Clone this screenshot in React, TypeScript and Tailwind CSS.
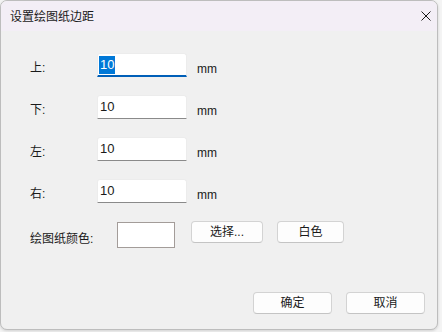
import React from "react";

const font = { fontFamily: '"Liberation Sans", "Noto Sans CJK SC", sans-serif' };

function Field({ label, focused }: { label: string; focused?: boolean }) {
  return (
    <div className="flex items-center h-[24px]">
      <div className="w-[67px] pt-[6px] text-[12px] text-[#1a1a1a]">{label}</div>
      <div
        className={
          "w-[90px] h-[24px] bg-white flex items-center pl-[1px] rounded-t-[3px] border-x border-t border-[#ececec] " +
          (focused ? "border-b-2 border-b-[#005fb8]" : "border-b border-b-[#8a8a8a]")
        }
      >
        {focused ? (
          <span className="bg-[#0078d7] text-white text-[13px] leading-[18px] px-[1px]">10</span>
        ) : (
          <span className="text-[#1a1a1a] text-[13px] leading-[18px] px-[1px]">10</span>
        )}
      </div>
      <div className="ml-[10px] pt-[8px] text-[12px] text-[#1a1a1a]">mm</div>
    </div>
  );
}

function Btn({ children, w }: { children: React.ReactNode; w: string }) {
  return (
    <div
      className={
        w +
        " h-[22px] bg-[#fdfdfd] border border-[#d3d3d3] border-b-[#c4c4c4] rounded-[4px] flex items-center justify-center text-[12px] text-[#1a1a1a]"
      }
    >
      {children}
    </div>
  );
}

export default function App() {
  return (
    <div className="w-[442px] h-[332px] bg-[#f4f4f4] overflow-hidden" style={font}>
      <div className="w-[438px] h-[330px] bg-[#f0f0f0] border border-[#bdbdbd] rounded-[7px] overflow-hidden flex flex-col shadow-[0_1px_3px_rgba(0,0,0,0.15)]">
        <div className="h-[30px] bg-[#f3eef6] flex items-center justify-between pl-[9px] pr-[6px] shrink-0">
          <span className="text-[12px] text-[#1a1a1a] pt-[1px]">设置绘图纸边距</span>
          <svg width="10" height="10" viewBox="0 0 10 10">
            <path d="M0.5 0.5 L9.5 9.5 M9.5 0.5 L0.5 9.5" stroke="#1a1a1a" strokeWidth="1" fill="none" />
          </svg>
        </div>
        <div className="flex flex-col pl-[29px] pt-[22px] gap-[18px]">
          <Field label="上:" focused />
          <Field label="下:" />
          <Field label="左:" />
          <Field label="右:" />
        </div>
        <div className="flex items-center pl-[29px] mt-[18px]">
          <div className="w-[87px] pt-[8px] text-[12px] text-[#1a1a1a]">绘图纸颜色:</div>
          <div className="w-[58px] h-[26px] bg-white border border-[#a39c99] mt-[1px]" />
          <div className="flex gap-[14px] ml-[16px] self-start">
            <Btn w="w-[72px]">选择...</Btn>
            <Btn w="w-[67px]">白色</Btn>
          </div>
        </div>
        <div className="flex justify-end gap-[14px] pr-[12px] mt-[44px]">
          <Btn w="w-[79px]">确定</Btn>
          <Btn w="w-[79px]">取消</Btn>
        </div>
      </div>
    </div>
  );
}
